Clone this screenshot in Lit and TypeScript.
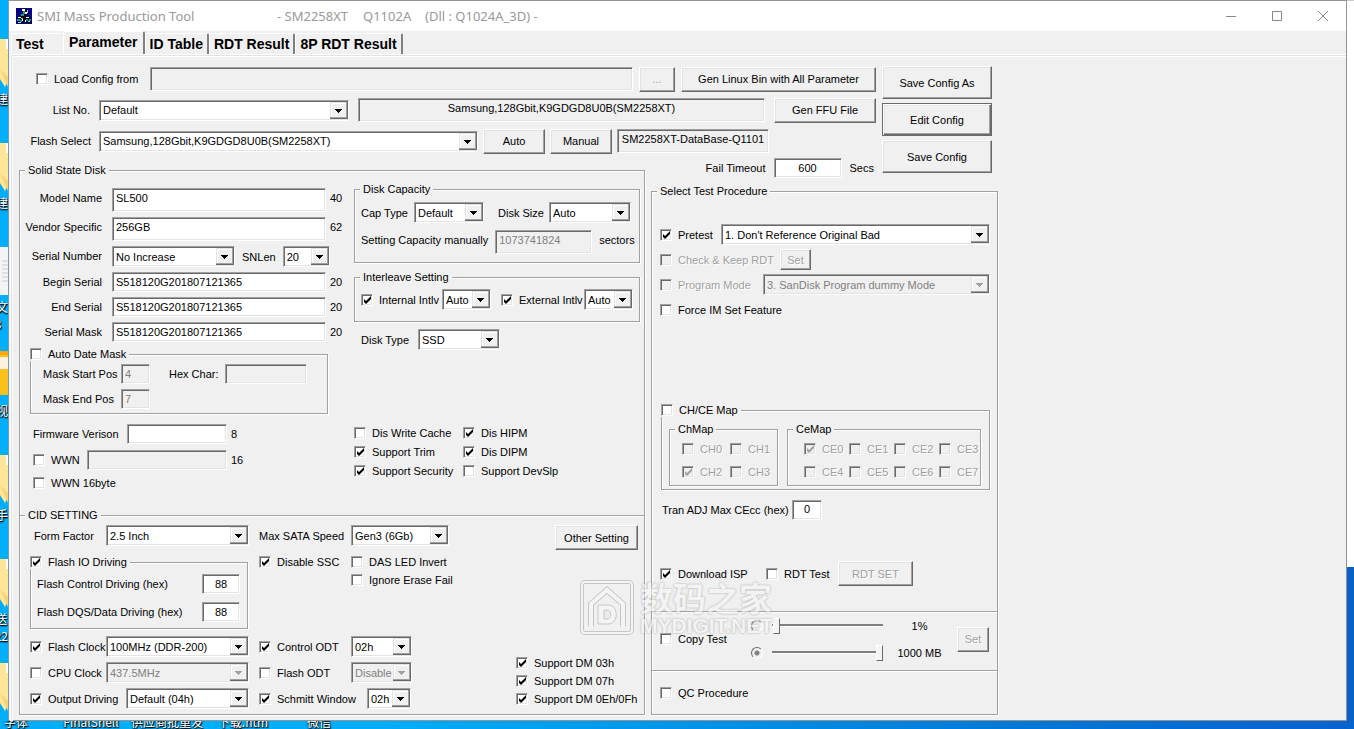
import { LitElement, html, css, svg } from "lit";
import { customElement } from "lit/decorators.js";
import { classMap } from "lit/directives/class-map.js";

const check = (label: string, checked = false, cls = "", disabled = false) => html`
  <label class=${classMap({ check: true, off: disabled, [cls || "plain"]: true })}>
    <input type="checkbox" class="box" .checked=${checked} ?disabled=${disabled} />${label}
  </label>`;

const select = (value: string, cls: string, id: string, disabled = false) => html`
  <select class="combo ${cls}" id=${id} aria-label=${value} ?disabled=${disabled}>
    <option>${value}</option>
  </select>`;

const field = (value: string, cls: string, id: string, disabled = false) => html`
  <input type="text" class="edit ${cls}" id=${id} .value=${value} ?disabled=${disabled} />`;

@customElement("app-root")
export class AppRoot extends LitElement {
  static styles = css`
    :host {
      display: block;
      font: 11px/14px "Liberation Sans", Arial, "Noto Sans CJK SC", sans-serif;
      color: #000;
    }
    * { box-sizing: border-box; }
    button, input, select { font: inherit; color: inherit; margin: 0; border-radius: 0; outline: none; }

    .desktop {
      display: grid;
      grid-template-columns: 8px minmax(0, 1fr) 7px;
      grid-template-rows: minmax(0, 1fr) 8px;
      height: 100vh;
      overflow: hidden;
      background: linear-gradient(90deg, #00aefa 0, #00aefa 28%, #0078d7 75%, #0a62cc 100%);
    }
    .left-icons { overflow: hidden; padding-top: 39px; display: flex; flex-direction: column; }
    .shortcut { height: 104px; flex: none; display: flex; flex-direction: column; align-items: flex-end; gap: 3px; }
    .shortcut svg { display: block; flex: none; }
    .caption {
      font: 12px/17px "Noto Sans CJK SC", sans-serif;
      color: #fff;
      text-shadow: 0 1px 2px #000, 1px 1px 1px #000;
      white-space: pre;
      text-align: center;
    }
    .right-edge { background: linear-gradient(#fff 0 566px, #0a5fcb 566px); border-top: 1px solid #ccc; }
    .bottom-icons { grid-column: 1 / -1; overflow: hidden; display: flex; align-items: flex-end; }
    .bottom-icons .caption { line-height: 14px; width: 76px; flex: none; }
    .bottom-icons .edge { width: 53px; padding-left: 4px; text-align: left; }

    .window {
      background: #f0f0f0;
      border: 1px solid #8f9499;
      border-left-color: #7f9db5;
      display: flex;
      flex-direction: column;
      position: relative;
    }
    .titlebar { height: 30px; background: #fff; display: flex; align-items: center; padding-left: 7px; flex: none; }
    .title { font: 13px/18px "Noto Sans", sans-serif; color: #999; white-space: pre; margin: 0; display: flex; }
    .title .name { width: 245px; padding-left: 5px; }
    .title .chip { width: 86px; }
    .title .fw { width: 62px; }
    .winbtns { margin-left: auto; display: flex; }
    .winbtn { width: 46px; height: 30px; padding: 0; border: 0; background: none; display: grid; place-items: center; }

    .tabs { display: flex; align-items: flex-end; height: 23px; padding-left: 2px; flex: none; }
    .tab {
      height: 21px;
      padding: 0 4px;
      background: #f0f0f0;
      border: 1px solid #fff;
      border-right: 2px solid #808080;
      border-bottom: 0;
      border-radius: 2px 2px 0 0;
      font: bold 14px/18px "Liberation Sans", Arial, sans-serif;
      white-space: nowrap;
      text-align: left;
    }
    .tab.first { width: 52px; border-right-color: #f0f0f0; }
    .tab.active { height: 23px; padding: 0 5px 2px; }
    .panel {
      flex: 1;
      margin-left: 1px;
      padding: 9px 0 6px 7px;
      border-top: 1px solid #fff;
      border-left: 1px solid #fff;
      box-shadow: inset 1px 1px 0 #e3e3e3, inset 2px 2px 0 #fff;
    }

    .layout {
      display: grid;
      grid-template-columns: 626px 225px 116px;
      column-gap: 6px;
      row-gap: 3px;
      padding: 2px 0 0 1px;
    }
    .top { grid-column: 1 / 3; display: flex; flex-direction: column; gap: 5px; }
    .actions { grid-column: 3; grid-row: 1 / 3; display: flex; flex-direction: column; gap: 4px; align-items: flex-start; }
    .timeout { grid-column: 2; display: flex; align-items: center; justify-content: flex-end; gap: 8px; padding-right: 2px; }
    .ssd { grid-column: 1; grid-row: 2 / 4; margin-top: 6px; }
    .proc { grid-column: 2 / 4; margin-top: 2px; }

    .row { display: flex; align-items: center; white-space: nowrap; }
    .top .row { height: 26px; }
    .gap5 { gap: 5px; }
    .gap6 { gap: 6px; }
    .gap7 { gap: 7px; }
    .gap9 { gap: 9px; }
    .grow { flex: 1; min-width: 0; }
    .right { text-align: right; }

    .check { display: flex; align-items: center; gap: 6px; white-space: nowrap; flex: none; }
    .check.load { width: 125px; padding-left: 17px; }
    .off { color: #a0a0a0; text-shadow: 1px 1px 0 #fff; }
    .box {
      appearance: none;
      width: 12px;
      height: 12px;
      flex: none;
      background: #fff center / 10px 10px no-repeat;
    }
    .box, .edit, .combo, .readout {
      border: 1px solid #fff;
      border-top-color: #a0a0a0;
      border-left-color: #a0a0a0;
      box-shadow: inset 1px 1px 0 #696969, inset -1px -1px 0 #e3e3e3;
    }
    .box:checked { background-image: url("data:image/svg+xml,%3Csvg xmlns='http://www.w3.org/2000/svg' viewBox='0 0 10 10'%3E%3Cpath d='M2 4v3l2 2 5-5V1L4 6z' fill='%23000'/%3E%3C/svg%3E"); }
    .box:disabled { background-color: #f0f0f0; }
    .box:disabled:checked { background-image: url("data:image/svg+xml,%3Csvg xmlns='http://www.w3.org/2000/svg' viewBox='0 0 10 10'%3E%3Cpath d='M2 4v3l2 2 5-5V1L4 6z' fill='%23a0a0a0'/%3E%3C/svg%3E"); }

    .edit { height: 20px; padding: 0 3px 1px; background: #fff; min-width: 0; flex: none; }
    .edit.tall { height: 24px; padding-bottom: 5px; }
    .edit.center { text-align: center; }
    .edit:disabled { background: #f0f0f0; color: #808080; }
    .edit.grow { flex: 1; }
    .readout { display: block; height: 24px; padding: 2px 0; text-align: center; }

    .combo {
      appearance: none;
      height: 21px;
      flex: none;
      padding: 0 18px 0 3px;
      background: #fff url("data:image/svg+xml,%3Csvg xmlns='http://www.w3.org/2000/svg' width='18' height='17' shape-rendering='crispEdges'%3E%3Cpath d='M0 0h18v17H0z' fill='%23696969'/%3E%3Cpath d='M0 0h17v16H0z' fill='%23a0a0a0'/%3E%3Cpath d='M0 0h16v15H0z' fill='%23e3e3e3'/%3E%3Cpath d='M1 1h15v14H1z' fill='%23fff'/%3E%3Cpath d='M2 2h14v13H2z' fill='%23f0f0f0'/%3E%3Cpath d='M5 7h7v1H5zM6 8h5v1H6zM7 9h3v1H7zM8 10h1v1H8z' fill='%23000'/%3E%3C/svg%3E") right 0 center no-repeat;
      box-shadow: inset 1px 1px 0 #696969, inset 0 -1px 0 #e3e3e3;
      opacity: 1;
    }
    .combo:disabled {
      background: #f0f0f0 url("data:image/svg+xml,%3Csvg xmlns='http://www.w3.org/2000/svg' width='18' height='17' shape-rendering='crispEdges'%3E%3Cpath d='M0 0h18v17H0z' fill='%23696969'/%3E%3Cpath d='M0 0h17v16H0z' fill='%23a0a0a0'/%3E%3Cpath d='M0 0h16v15H0z' fill='%23e3e3e3'/%3E%3Cpath d='M1 1h15v14H1z' fill='%23fff'/%3E%3Cpath d='M2 2h14v13H2z' fill='%23f0f0f0'/%3E%3Cpath d='M5 7h7v1H5zM6 8h5v1H6zM7 9h3v1H7zM8 10h1v1H8z' fill='%23a0a0a0'/%3E%3C/svg%3E") right 0 center no-repeat;
      color: #808080;
    }

    .btn {
      height: 25px;
      padding: 0;
      flex: none;
      background: #f0f0f0;
      border: 1px solid #fff;
      border-right-color: #696969;
      border-bottom-color: #696969;
      box-shadow: inset -1px -1px 0 #a0a0a0, inset 1px 1px 0 #e3e3e3;
      white-space: nowrap;
    }
    .btn:disabled { color: #a0a0a0; text-shadow: 1px 1px 0 #fff; }
    .btn.big { width: 110px; height: 33px; }
    .btn.default {
      border-color: #696969;
      box-shadow: inset 1px 1px 0 #fff, inset -1px -1px 0 #696969, inset -2px -2px 0 #a0a0a0, inset 2px 2px 0 #e3e3e3;
    }
    .btn.low { height: 21px; }

    fieldset {
      margin: 0;
      padding: 0;
      min-width: 0;
      border: 1px solid #a0a0a0;
      box-shadow: 1px 1px 0 #fff, inset 1px 1px 0 #fff;
    }
    legend { margin-left: 5px; padding: 0 3px; height: 14px; background: #f0f0f0; white-space: nowrap; }
    legend.with-box { margin-left: -1px; padding-left: 0; display: flex; align-items: center; }

    .w29 { width: 29px; } .w30 { width: 30px; } .w31 { width: 31px; } .w36 { width: 36px; }
    .w38 { width: 38px; } .w44 { width: 44px; } .w47 { width: 47px; } .w49 { width: 49px; }
    .w53 { width: 53px; } .w54 { width: 54px; } .w57 { width: 57px; } .w61 { width: 61px; }
    .w62 { width: 62px; } .w65 { width: 65px; } .w68 { width: 68px; } .w70 { width: 70px; }
    .w71 { width: 71px; } .w72 { width: 72px; } .w75 { width: 75px; } .w76 { width: 76px; }
    .w81 { width: 81px; } .w82 { width: 82px; } .w83 { width: 83px; } .w92 { width: 92px; }
    .w94 { width: 94px; } .w96 { width: 96px; } .w97 { width: 97px; } .w98 { width: 98px; }
    .w100 { width: 100px; } .w102 { width: 102px; } .w103 { width: 103px; } .w106 { width: 106px; }
    .w108 { width: 108px; } .w120 { width: 120px; } .w123 { width: 123px; } .w130 { width: 130px; }
    .w140 { width: 140px; } .w143 { width: 143px; } .w152 { width: 152px; } .w165 { width: 165px; }
    .w195 { width: 195px; } .w227 { width: 227px; } .w250 { width: 250px; } .w269 { width: 269px; }
    .w379 { width: 379px; }

    .ssd-top { display: grid; grid-template-columns: 330px minmax(0, 1fr); column-gap: 4px; padding: 0 4px 18px 0; }
    .identity { display: flex; flex-direction: column; gap: 5px; padding-top: 11px; }
    .idgrid { display: grid; grid-template-columns: 92px 214px 1fr; row-gap: 5px; align-items: start; white-space: nowrap; }
    .idgrid .lab { text-align: right; padding: 3px 10px 0 0; }
    .idgrid .count { padding-top: 3px; }
    .idgrid .span { grid-column: 2 / 4; }
    .count { padding-left: 4px; }
    .datemask { margin-left: 10px; width: 298px; }
    .maskgrid {
      display: grid;
      grid-template-columns: 78px 29px 75px 82px;
      row-gap: 5px;
      align-items: center;
      padding: 3px 0 4px 12px;
      white-space: nowrap;
    }
    .maskgrid .mid { padding-left: 19px; }
    .firmware { display: flex; flex-direction: column; gap: 6px; padding: 5px 0 0 13px; }

    .capacity { display: flex; flex-direction: column; gap: 7px; padding: 5px 0 10px; }
    .capbody { display: flex; flex-direction: column; gap: 7px; padding: 6px 0 8px 6px; }
    .capbody .mid { padding-left: 14px; }
    .manual { align-items: flex-start; }
    .manual label, .manual span { padding-top: 3px; }
    .ilbody { padding: 5px 6px 11px; justify-content: space-between; }
    .disktype { padding-left: 7px; }
    .flags { margin-top: auto; display: grid; grid-template-columns: 109px 1fr; grid-auto-rows: 19px; }

    .cid { border-width: 1px 0 0; box-shadow: inset 0 1px 0 #fff; }
    .cidgrid { display: grid; grid-template-columns: 219px 1fr 122px; column-gap: 10px; padding: 3px 6px 5px 10px; }
    .stack { display: flex; flex-direction: column; gap: 5px; }
    .indent { padding-left: 4px; }
    .flashio { width: 218px; margin: 4px 0 2px; }
    .iobody { display: flex; flex-direction: column; gap: 8px; padding: 5px 0 6px 6px; }
    .sata { display: grid; grid-template-columns: 92px 1fr; grid-auto-rows: 18px; padding-top: 2px; }
    .sata .second { grid-column: 2; }
    .bottom { margin-top: auto; }
    .side { display: flex; flex-direction: column; padding-bottom: 1px; }
    .side .btn { align-self: flex-end; }
    .dm { margin-top: auto; display: grid; grid-auto-rows: 18px; }

    .procbody { padding: 26px 7px 25px 8px; display: flex; flex-direction: column; gap: 4px; }
    .procbody .row { min-height: 21px; }
    .chce { margin: 79px 0 5px 1px; }
    .maps { display: grid; grid-template-columns: 109px 194px; column-gap: 9px; padding: 5px 7px 3px; }
    .chs { display: grid; grid-template-columns: 48px 1fr; grid-auto-rows: 23px; padding: 1px 0 2px 12px; }
    .ces { display: grid; grid-template-columns: repeat(4, 45px); grid-auto-rows: 23px; padding: 1px 0 2px 16px; }
    .tran { padding-left: 2px; }
    .isp { padding-top: 37px; }

    .section { border-top: 1px solid #a0a0a0; box-shadow: inset 0 1px 0 #fff; }
    .copy { display: grid; grid-template-columns: 91px 12px 129px 1fr 32px; align-items: center; padding: 0 8px 4px; height: 59px; }
    .copy .check, .copy .btn { grid-row: 1 / 3; }
    .copy .value { text-align: center; padding-right: 10px; }
    .copy .btn { grid-column: 5; }
    .dot {
      appearance: none;
      width: 12px;
      height: 12px;
      border-radius: 50%;
      border: 1px solid #fff;
      border-top-color: #696969;
      border-left-color: #696969;
      background: #f0f0f0;
    }
    .dot:checked { background: radial-gradient(#808080 0 2px, #f0f0f0 3px); }
    .slider { appearance: none; width: 111px; height: 16px; margin: 0 9px; background: none; }
    .slider::-webkit-slider-runnable-track { height: 3px; background: #808080; border-bottom: 1px solid #fff; }
    .slider::-webkit-slider-thumb {
      appearance: none;
      width: 7px;
      height: 16px;
      margin-top: -6px;
      background: #f4f4f4;
      border: 1px solid #fff;
      border-right-color: #696969;
      border-bottom-color: #696969;
    }
    .qc { padding: 15px 8px 12px; }

    .watermark {
      position: absolute;
      left: 571px;
      top: 578px;
      display: flex;
      gap: 6px;
      align-items: center;
      pointer-events: none;
      opacity: 0.6;
      color: #f6f6f6;
      text-shadow: 0 0 2px #999, 0 0 2px #aaa;
      white-space: nowrap;
    }
    .watermark .cn { font: bold 33px/36px "Noto Sans CJK SC", sans-serif; }
    .watermark .en { font: bold 21px/22px "Liberation Sans", Arial, sans-serif; }
  `;

  private folder() {
    return svg`<svg width="48" height="48" viewBox="0 0 48 48">
      <path d="M0 0h48v42l-3 6-5-8z" fill="#ffe597"/>
      <path d="M46 0h2v10h-2z" fill="#fff"/><path d="M40 30l8 8v10z" fill="#f5d57b"/></svg>`;
  }

  private desktopIcons() {
    const items: [string, string][] = [
      ["folder", "建"], ["folder", "建"], ["page", "量文\n(3"], ["zip", "视"],
      ["folder", "怪手"], ["folder", "送\n22"], ["folder", ""],
    ];
    return items.map(([kind, text]) => html`
      <div class="shortcut">
        ${kind === "folder" ? this.folder()
          : kind === "page"
            ? html`<svg width="48" height="48"><path d="M0 0h48v48H0z" fill="#f4f4f4"/><path d="M42 14h6m-6 4h6m-6 4h6m-6 4h6m-6 4h6m-6 4h6" stroke="#ccc"/></svg>`
            : html`<svg width="48" height="48"><path d="M0 0h48v44H0z" fill="#fbc11b"/><path d="M40 6h8v12h-8z" fill="#fff1dc"/><path d="M0 0h48v4H0z" fill="#ffa400"/></svg>`}
        <span class="caption">${text}</span>
      </div>`);
  }

  private ssd() {
    return html`
      <fieldset class="ssd">
        <legend>Solid State Disk</legend>
        <div class="ssd-top">
          <div class="identity">
            <div class="idgrid">
              <label class="lab" for="model">Model Name</label>${field("SL500", "tall", "model")}<span class="count">40</span>
              <label class="lab" for="vendor">Vendor Specific</label>${field("256GB", "tall", "vendor")}<span class="count">62</span>
              <label class="lab" for="serial">Serial Number</label>
              <div class="row gap7 span">
                ${select("No Increase", "w123", "serial")}<label for="snlen">SNLen</label>${select("20", "w47", "snlen")}
              </div>
              <label class="lab" for="begin">Begin Serial</label>${field("S518120G201807121365", "", "begin")}<span class="count">20</span>
              <label class="lab" for="end">End Serial</label>${field("S518120G201807121365", "", "end")}<span class="count">20</span>
              <label class="lab" for="mask">Serial Mask</label>${field("S518120G201807121365", "", "mask")}<span class="count">20</span>
            </div>
            <fieldset class="datemask">
              <legend class="with-box">${check("Auto Date Mask")}</legend>
              <div class="maskgrid">
                <label for="mstart">Mask Start Pos</label>${field("4", "w29", "mstart", true)}
                <label class="mid" for="hexchar">Hex Char:</label>${field("", "w82", "hexchar", true)}
                <label for="mend">Mask End Pos</label>${field("7", "w29", "mend", true)}
              </div>
            </fieldset>
            <div class="firmware">
              <div class="row"><label class="w94" for="fw">Firmware Verison</label>${field("", "w100", "fw")}<span class="count">8</span></div>
              <div class="row">${check("WWN", false, "w54")}${field("", "w140", "wwn", true)}<span class="count">16</span></div>
              <div class="row">${check("WWN 16byte")}</div>
            </div>
          </div>
          <div class="capacity">
            <fieldset>
              <legend>Disk Capacity</legend>
              <div class="capbody">
                <div class="row">
                  <label class="w53" for="cap">Cap Type</label>${select("Default", "w70", "cap")}
                  <label class="w65 mid" for="dsize">Disk Size</label>${select("Auto", "w82", "dsize")}
                </div>
                <div class="row manual gap7">
                  <label for="capman">Setting Capacity manually</label>${field("1073741824", "w97 tall", "capman", true)}
                  <span>sectors</span>
                </div>
              </div>
            </fieldset>
            <fieldset>
              <legend>Interleave Setting</legend>
              <div class="row ilbody">
                <div class="row">${check("Internal Intlv", true, "w81")}${select("Auto", "w49", "intl")}</div>
                <div class="row">${check("External Intlv", true, "w83")}${select("Auto", "w49", "extl")}</div>
              </div>
            </fieldset>
            <div class="row disktype"><label class="w57" for="dtype">Disk Type</label>${select("SSD", "w82", "dtype")}</div>
            <div class="flags">
              ${check("Dis Write Cache")}${check("Dis HIPM", true)}
              ${check("Support Trim", true)}${check("Dis DIPM", true)}
              ${check("Support Security", true)}${check("Support DevSlp")}
            </div>
          </div>
        </div>
        <fieldset class="cid">
          <legend>CID SETTING</legend>
          <div class="cidgrid">
            <div class="stack">
              <div class="row"><label class="w76 indent" for="form">Form Factor</label>${select("2.5 Inch", "w143", "form")}</div>
              <fieldset class="flashio">
                <legend class="with-box">${check("Flash IO Driving", true)}</legend>
                <div class="iobody">
                  <div class="row"><label class="w165" for="fcd">Flash Control Driving (hex)</label>${field("88", "w38 center", "fcd")}</div>
                  <div class="row"><label class="w165" for="fdd">Flash DQS/Data Driving (hex)</label>${field("88", "w38 center", "fdd")}</div>
                </div>
              </fieldset>
              <div class="row">${check("Flash Clock", true, "w76")}${select("100MHz (DDR-200)", "w143", "fclk")}</div>
              <div class="row">${check("CPU Clock", false, "w76")}${select("437.5MHz", "w143", "cclk", true)}</div>
              <div class="row">${check("Output Driving", true, "w96")}${select("Default (04h)", "w123", "odrv")}</div>
            </div>
            <div class="stack">
              <div class="row"><label class="w92" for="sata">Max SATA Speed</label>${select("Gen3 (6Gb)", "w98", "sata")}</div>
              <div class="sata">
                ${check("Disable SSC", true)}${check("DAS LED Invert")}${check("Ignore Erase Fail", false, "second")}
              </div>
              <div class="row bottom">${check("Control ODT", true, "w92")}${select("02h", "w61", "codt")}</div>
              <div class="row">${check("Flash ODT", false, "w92")}${select("Disable", "w61", "fodt", true)}</div>
              <div class="row">${check("Schmitt Window", true, "w108")}${select("02h", "w44", "schm")}</div>
            </div>
            <div class="side">
              <button class="btn w83">Other Setting</button>
              <div class="dm">
                ${check("Support DM 03h", true)}${check("Support DM 07h", true)}${check("Support DM 0Eh/0Fh", true)}
              </div>
            </div>
          </div>
        </fieldset>
      </fieldset>`;
  }

  private procedure() {
    return html`
      <fieldset class="proc">
        <legend>Select Test Procedure</legend>
        <div class="procbody">
          <div class="row">${check("Pretest", true, "w61")}${select("1. Don't Reference Original Bad", "w269", "pre")}</div>
          <div class="row">${check("Check & Keep RDT", false, "w120", true)}<button class="btn low w31" disabled>Set</button></div>
          <div class="row">${check("Program Mode", false, "w103", true)}${select("3. SanDisk Program dummy Mode", "w227", "pmode", true)}</div>
          <div class="row">${check("Force IM Set Feature")}</div>
          <fieldset class="chce">
            <legend class="with-box">${check("CH/CE Map")}</legend>
            <div class="maps">
              <fieldset>
                <legend>ChMap</legend>
                <div class="chs">${[0, 1, 2, 3].map((n) => check(`CH${n}`, n === 2, "", true))}</div>
              </fieldset>
              <fieldset>
                <legend>CeMap</legend>
                <div class="ces">${[0, 1, 2, 3, 4, 5, 6, 7].map((n) => check(`CE${n}`, n === 0, "", true))}</div>
              </fieldset>
            </div>
          </fieldset>
          <div class="row tran"><label class="w130" for="tran">Tran ADJ Max CEcc (hex)</label>${field("0", "w30 center", "tran")}</div>
          <div class="row isp">${check("Download ISP", true, "w106")}${check("RDT Test", false, "w72")}<button class="btn w75" disabled>RDT SET</button></div>
        </div>
        <div class="section copy">
          ${check("Copy Test")}
          <input type="radio" class="dot" name="amount" aria-label="Percent" disabled />
          <input type="range" class="slider" aria-label="Percent" min="0" max="100" .value=${"1"} disabled />
          <span class="value">1%</span>
          <button class="btn" disabled>Set</button>
          <input type="radio" class="dot" name="amount" aria-label="Size" checked disabled />
          <input type="range" class="slider" aria-label="Size" min="0" max="1000" value="1000" disabled />
          <span class="value">1000 MB</span>
        </div>
        <div class="section qc">${check("QC Procedure")}</div>
      </fieldset>`;
  }

  render() {
    return html`
      <div class="desktop">
        <div class="left-icons">${this.desktopIcons()}</div>
        <main class="window">
          <header class="titlebar">
            <svg width="16" height="16" viewBox="0 0 16 16" shape-rendering="crispEdges">
              <path d="M0 0h16v16H0z" fill="#000080"/>
              <path d="M6 1h5v3l1 3h-2v2h3l2 2v3l-1 1H9v-2H7v2H2l-1-1v-3l3-2V7l2-2z" fill="#000"/>
              <path d="M6 1h3v2H6zM9 4h2v2H9zM2 9h3v1H2zM10 9h3v1h-3zM6 11h1v2H6zM9 12h1v2H9z" fill="#fff"/>
              <path d="M7 3h2v3H7zM5 6h3v2H5zM1 11h3v2H1zM4 12h2v2H4zM10 11h2v2h-2zM13 11h2v2h-2z" fill="#00a0a0"/>
              <path d="M11 2h1v3h-1zM5 10h2v1H5zM12 13h2v1h-2zM2 14h3v1H2z" fill="#c0c0c0"/>
            </svg>
            <h1 class="title"><span class="name">SMI Mass Production Tool</span><span class="chip">- SM2258XT</span><span class="fw">Q1102A</span><span>(Dll : Q1024A_3D) -</span></h1>
            <div class="winbtns">
              <button class="winbtn" aria-label="Minimize"><svg width="10" height="10"><path d="M0 5.5h10" stroke="#888"/></svg></button>
              <button class="winbtn" aria-label="Maximize"><svg width="10" height="10"><path d="M.5.5h9v9h-9z" fill="none" stroke="#888"/></svg></button>
              <button class="winbtn" aria-label="Close"><svg width="10" height="10"><path d="M0 0l10 10M10 0L0 10" stroke="#888"/></svg></button>
            </div>
          </header>
          <nav class="tabs">
            <button class="tab first">Test</button>
            <button class="tab active">Parameter</button>
            <button class="tab">ID Table</button>
            <button class="tab">RDT Result</button>
            <button class="tab">8P RDT Result</button>
          </nav>
          <div class="panel">
            <div class="layout">
              <div class="top">
                <div class="row gap6">
                  ${check("Load Config from", false, "load")}
                  ${field("", "tall grow", "cfg", true)}
                  <button class="btn w36" disabled>...</button>
                  <button class="btn w195">Gen Linux Bin with All Parameter</button>
                </div>
                <div class="row gap9">
                  <label class="w71 right" for="listno">List No.</label>${select("Default", "w250", "listno")}
                  <output class="readout grow">Samsung,128Gbit,K9GDGD8U0B(SM2258XT)</output>
                  <button class="btn w102">Gen FFU File</button>
                </div>
                <div class="row gap5">
                  <label class="w75 right" for="flash">Flash Select&nbsp;</label>${select("Samsung,128Gbit,K9GDGD8U0B(SM2258XT)", "w379", "flash")}
                  <button class="btn w62">Auto</button>
                  <button class="btn w62">Manual</button>
                  <output class="readout w152">SM2258XT-DataBase-Q1101</output>
                </div>
              </div>
              <div class="actions">
                <button class="btn big">Save Config As</button>
                <button class="btn big default">Edit Config</button>
                <button class="btn big">Save Config</button>
              </div>
              <div class="timeout">
                <label for="fail">Fail Timeout</label>${field("600", "w68 center", "fail")}<span>Secs</span>
              </div>
              ${this.ssd()}
              ${this.procedure()}
            </div>
          </div>
          <div class="watermark" aria-hidden="true">
            <svg width="54" height="56" viewBox="0 0 54 56" fill="none">
              <rect x="2" y="2" width="50" height="51" rx="3" stroke="#aaa" stroke-width="4"/>
              <rect x="2" y="2" width="50" height="51" rx="3" stroke="#f8f8f8" stroke-width="2"/>
              <path d="M11 46V24L27 10l16 14v22" stroke="#aaa" stroke-width="6"/>
              <path d="M11 46V24L27 10l16 14v22" stroke="#f8f8f8" stroke-width="4"/>
              <path d="M18 25h10c11 0 11 19 0 19H18z" fill="#f8f8f8" stroke="#aaa"/>
              <path d="M24 30h3c5 0 5 9 0 9h-3z" fill="#e8e8e8" stroke="#aaa"/>
            </svg>
            <div><div class="cn">数码之家</div><div class="en">MYDIGIT.NET</div></div>
          </div>
        </main>
        <div class="right-edge"></div>
        <div class="bottom-icons">
          <span class="caption edge">字体</span>
          <span class="caption">FinalShell</span>
          <span class="caption">供应商批重发</span>
          <span class="caption">下载.htm</span>
          <span class="caption">微信</span>
        </div>
      </div>`;
  }
}
